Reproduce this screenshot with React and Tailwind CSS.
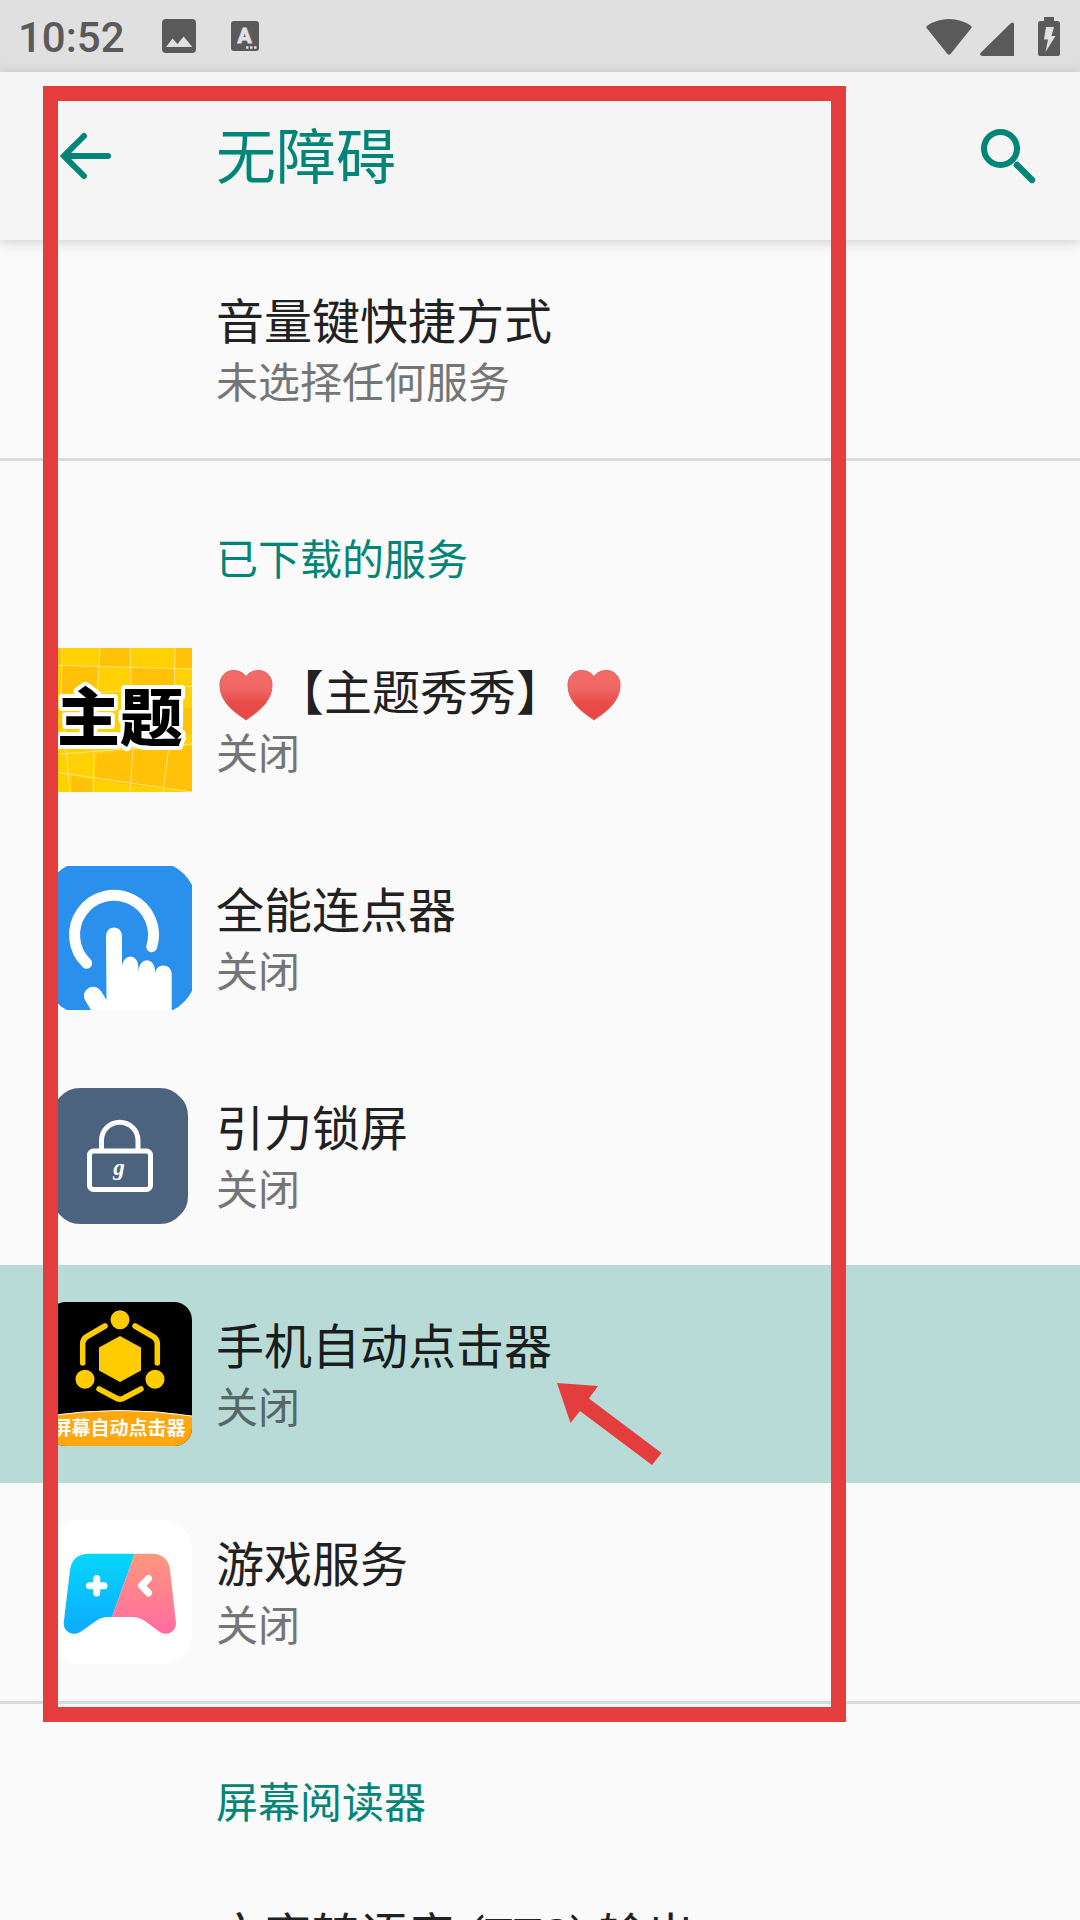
const services = [
  { id: 'theme', name: '【主题秀秀】', hearts: true, Icon: ThemeIcon },
  { id: 'clicker', name: '全能连点器', Icon: TapIcon },
  { id: 'lock', name: '引力锁屏', Icon: LockIcon },
  { id: 'auto', name: '手机自动点击器', Icon: AutoClickIcon, active: true },
  { id: 'game', name: '游戏服务', Icon: GameIcon },
];

function Heart() {
  return (
    <svg viewBox="0 0 60 64" className="h-16 w-[60px]" aria-hidden="true">
      <defs>
        <linearGradient id="heart" x1="0" y1="0" x2="0" y2="1">
          <stop offset="0" stopColor="#f56b69" />
          <stop offset="0.4" stopColor="#ef6562" />
          <stop offset="0.65" stopColor="#e94c49" />
          <stop offset="1" stopColor="#e64643" />
        </linearGradient>
      </defs>
      <path
        d="M30 63C22 57 4 47 4 28C4 19 10 13.500 17.500 13.500C23 13.500 28 16 30 20C32 16 37 13.500 42.500 13.500C50 13.500 56 19 56 28C56 47 38 57 30 63Z"
        fill="url(#heart)"
        stroke="#d9605d"
        strokeWidth="1"
      />
    </svg>
  );
}

function ThemeIcon() {
  return (
    <svg viewBox="0 0 144 144" className="size-36" aria-hidden="true">
      <rect width="144" height="144" fill="#ffd002" />
      <g fill="#ffc208">
        <path d="M51 0H82V19L51 18ZM127 0H144V21L127 20ZM13 17L51 18L50 44L11 48ZM82 19L127 20L126 39L82 42ZM13 48H48V80H12ZM127 60H144V86L127 87ZM84 46H126V88H84ZM82 102L119 100L117 141L82 137ZM119 100L144 98V144L117 141ZM49 106L82 102V137L47 131ZM24 128L45 132V144H24ZM0 0H14V18H0Z" />
      </g>
      <g fill="none" stroke="#ffe57a" strokeWidth="1">
        <path d="M14 0L13 48L22 144M52 0L46 100L45 144M82 0L85 100L82 144M127 0L126 60L115 144M0 17L144 21M0 48L144 38M0 107L144 96M0 123L144 144" />
      </g>
      <text
        x="72"
        y="92"
        textAnchor="middle"
        fontSize="63"
        fill="#000"
        stroke="#fff"
        strokeWidth="8"
        strokeLinejoin="round"
        paintOrder="stroke"
        className="font-['Noto_Sans_CJK_SC',sans-serif] font-black"
      >
        主题
      </text>
    </svg>
  );
}

function TapIcon() {
  return (
    <svg viewBox="0 0 144 144" className="size-36" aria-hidden="true">
      <path d="M19 0H125Q137 6 144 19V125Q137 138 125 144H19Q7 138 0 125V19Q7 6 19 0Z" fill="#2b8fec" />
      <path d="M38.700 97.300A39.500 39.500 0 1 1 103.700 80.700" fill="none" stroke="#fff" strokeWidth="11" strokeLinecap="round" />
      <path
        d="M58 69.500A8 8 0 0 1 74 69.500V101C75 87 90 87 90.300 101V107C91 90 106 91 107 104V109C107 96 123.700 97 123.700 108V144H43L37 134C32 124 46 115 53 125L58.500 134Z"
        fill="#fff"
      />
    </svg>
  );
}

function LockIcon() {
  return (
    <svg viewBox="0 0 144 144" className="size-36" aria-hidden="true">
      <path d="M32 4H112Q124 4 132 13Q140 20 140 32V112Q140 124 132 131Q124 140 112 140H32Q20 140 12 131Q4 124 4 112V32Q4 20 12 13Q20 4 32 4Z" fill="#4c6380" />
      <g fill="none" stroke="#fff" strokeWidth="5">
        <rect x="41.500" y="67" width="61" height="38.500" rx="4" />
        <path d="M53.500 66V56.500A18.200 18.200 0 0 1 90 56.500V66" />
      </g>
      <text
        x="71"
        y="91"
        textAnchor="middle"
        fontSize="23"
        fill="#fff"
        className="font-['Liberation_Serif',serif] font-bold italic"
      >
        g
      </text>
    </svg>
  );
}

function AutoClickIcon() {
  return (
    <svg viewBox="0 0 144 144" className="size-36" aria-hidden="true">
      <defs>
        <clipPath id="auto-clip">
          <rect width="144" height="144" rx="18" />
        </clipPath>
      </defs>
      <g clipPath="url(#auto-clip)">
        <rect width="144" height="144" fill="#000" />
        <path d="M0 114Q72 103 144 114V144H0Z" fill="#fea70e" />
        <path d="M0 114Q72 103 144 114" fill="none" stroke="#fff" strokeWidth="1" />
        <g fill="#ffcc00">
          <circle cx="72" cy="17.700" r="9.500" />
          <circle cx="37" cy="77.300" r="9.500" />
          <circle cx="107" cy="77.300" r="9.500" />
          <path d="M72 34L93 45.500V68.500L72 80L51 68.500V45.500Z" />
        </g>
        <g fill="none" stroke="#ffcc00" strokeWidth="5.500" strokeLinecap="round">
          <path d="M34.700 61V42Q34.700 37 39 34.500L57 24" />
          <path d="M109.300 61V42Q109.300 37 105 34.500L87 24" />
          <path d="M51 87L69 96.500Q72 98 75 96.500L93 87" />
        </g>
        <text
          x="71"
          y="133"
          textAnchor="middle"
          fontSize="19"
          fill="#fff"
          className="font-['Noto_Sans_CJK_SC',sans-serif] font-bold"
        >
          屏幕自动点击器
        </text>
      </g>
    </svg>
  );
}

function GameIcon() {
  return (
    <svg viewBox="0 0 144 144" className="size-36" aria-hidden="true">
      <defs>
        <linearGradient id="game-blue" x1="0" y1="0" x2="0" y2="1">
          <stop offset="0" stopColor="#06d6fb" />
          <stop offset="1" stopColor="#0eaaff" />
        </linearGradient>
        <linearGradient id="game-pink" x1="0" y1="0" x2="0" y2="1">
          <stop offset="0" stopColor="#ff977c" />
          <stop offset="1" stopColor="#ff6ca2" />
        </linearGradient>
      </defs>
      <rect width="144" height="144" rx="28" fill="#fff" />
      <path
        d="M86.700 33.700H41Q24 34 22 50L15.700 103C15.500 112 25 117 33 111.500L48 101Q53 97 60 97H64Z"
        fill="url(#game-blue)"
      />
      <path
        d="M86.700 33.700H104Q120 34 122 50L128 103C128 112 119 117 111 111.500L97 101Q91 97 84 97H64Z"
        fill="url(#game-pink)"
      />
      <g fill="none" stroke="#fff" strokeWidth="7" strokeLinecap="round" strokeLinejoin="round">
        <path d="M48.700 58.500V73M41.500 65.700H56" />
        <path d="M100.500 58.500L93.500 65.700L100.500 73" />
      </g>
    </svg>
  );
}

function StatusBar() {
  return (
    <div className="flex h-[72px] shrink-0 items-center bg-[#e0e0e0] pr-5 pl-[18px] text-[#5a5a5a]">
      <span className="pt-1 font-['Roboto',sans-serif] text-[42px] leading-none font-medium">10:52</span>
      <svg viewBox="0 0 34 34" className="ml-[37px] size-[34px]" aria-hidden="true">
        <rect width="34" height="34" rx="4" fill="currentColor" />
        <path d="M4 28L10.500 19.500L15.500 25L21.700 17.500L30.300 28Z" fill="#e0e0e0" />
      </svg>
      <svg viewBox="0 0 28 30" className="ml-[35px] h-[30px] w-7" aria-hidden="true">
        <rect width="28" height="30" rx="3" fill="currentColor" />
        <text
          x="13.500"
          y="22"
          textAnchor="middle"
          fontSize="21"
          fill="#e0e0e0"
          stroke="#e0e0e0"
          strokeWidth="1"
          className="font-['Roboto',sans-serif] font-bold"
        >
          A
        </text>
        <path d="M15 26.500h2.500M19 26.500h2.500M23 26.500h2.500" stroke="#e0e0e0" strokeWidth="2.500" />
      </svg>
      <div className="ml-auto flex items-end">
        <svg viewBox="0 0 46 37" className="h-[37px] w-[46px]" aria-hidden="true">
          <path d="M1 9.500Q-.5 8 1.500 6.500Q11 0 23 0T44.500 6.500Q46.500 8 45 9.500L24.500 35Q23 36.500 21.500 35Z" fill="currentColor" />
        </svg>
        <svg viewBox="0 0 34 34" className="ml-2 size-[34px]" aria-hidden="true">
          <path d="M34 2V34H2Q-1 33 1 30.500L31 1Q33.500-.5 34 2Z" fill="currentColor" />
        </svg>
        <svg viewBox="0 0 22 39" className="ml-6 h-[39px] w-[22px]" aria-hidden="true">
          <path d="M6 0H16V4H20Q22 4 22 6.500V37Q22 39 20 39H2Q0 39 0 37V6.500Q0 4 2 4H6Z" fill="currentColor" />
          <path d="M8 10H16L13.500 19H17.500L7.500 35L10 22.500H6Z" fill="#e0e0e0" />
        </svg>
      </div>
    </div>
  );
}

function AppBar() {
  return (
    <header className="z-10 flex h-[168px] shrink-0 items-center bg-[#f5f5f5] pr-9 pl-12 text-[#008577] shadow-[0_2px_12px_rgba(0,0,0,0.18)]">
      <button type="button" aria-label="返回">
        <svg viewBox="0 0 72 72" className="size-[72px]" fill="none" stroke="currentColor" strokeWidth="6" strokeLinecap="round">
          <path d="M36 16L16 36L36 56M17 36H60" />
        </svg>
      </button>
      <h1 className="ml-24 flex-1 pb-1.5 text-[60px] leading-[72px]">无障碍</h1>
      <button type="button" aria-label="搜索">
        <svg viewBox="0 0 72 72" className="size-[72px]" fill="none" stroke="currentColor" strokeLinecap="round">
          <circle cx="28.500" cy="28.500" r="16.500" strokeWidth="6" />
          <path d="M45 45L60 60" strokeWidth="6.500" />
        </svg>
      </button>
    </header>
  );
}

function Category({ children }) {
  return <h2 className="pt-16 pb-[22px] pl-[216px] text-[42px] leading-[64px] text-[#008577]">{children}</h2>;
}

function Preference({ name, summary, hearts, Icon, active }) {
  return (
    <button
      type="button"
      className={`flex w-full items-start gap-6 pt-12 pb-[46px] pl-12 text-left ${active ? 'bg-[#b8dbd7]' : ''}`}
    >
      <span className="-mt-[11px] -mb-3 size-36 shrink-0">{Icon && <Icon />}</span>
      <span className="flex flex-col">
        <span className={`flex h-[60px] items-center text-[48px] leading-[60px] ${active ? 'text-[#181d1d]' : 'text-[#212121]'}`}>
          {hearts && <Heart />}
          <span>{name}</span>
          {hearts && <Heart />}
        </span>
        {summary && (
          <span className={`text-[42px] leading-[64px] ${active ? 'text-[#566765]' : 'text-[#757575]'}`}>{summary}</span>
        )}
      </span>
    </button>
  );
}

function Highlight() {
  return (
    <div className="pointer-events-none absolute inset-0 z-20" aria-hidden="true">
      <div className="absolute top-[86px] right-[234px] left-[43px] h-[1636px] border-[15px] border-[#e43d3d]" />
      <svg viewBox="0 0 106 84" className="absolute top-[1382px] left-[556px] h-[84px] w-[106px]">
        <path d="M1 1L42 4L33 16.500L105.500 71L96 83L24 29L14.500 41Z" fill="#e43d3d" />
      </svg>
    </div>
  );
}

function App() {
  return (
    <div className="relative flex h-screen flex-col overflow-hidden bg-[#fafafa] font-['Noto_Sans_CJK_SC',sans-serif]">
      <StatusBar />
      <AppBar />
      <main className="min-h-0 flex-1 overflow-hidden">
        <Preference name="音量键快捷方式" summary="未选择任何服务" />
        <section className="border-t-[3px] border-[#dadada]">
          <Category>已下载的服务</Category>
          {services.map((service) => (
            <Preference key={service.id} summary="关闭" {...service} />
          ))}
        </section>
        <section className="border-t-[3px] border-[#dadada]">
          <Category>屏幕阅读器</Category>
          <Preference
            name={
              <>
                文字转语音<span className="font-['Roboto',sans-serif] leading-none"> (TTS) </span>输出
              </>
            }
          />
        </section>
      </main>
      <Highlight />
    </div>
  );
}

export default App;
